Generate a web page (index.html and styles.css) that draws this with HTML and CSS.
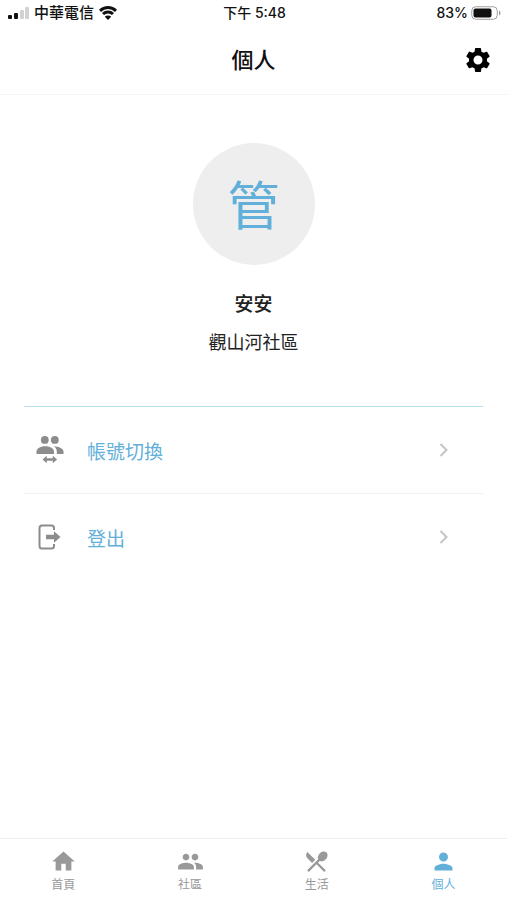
FILE: index.html
```html
<!DOCTYPE html>
<html lang="zh-Hant">
<head>
  <meta charset="UTF-8">
  <meta name="viewport" content="width=device-width, initial-scale=1">
  <title>個人</title>
  <link rel="stylesheet" href="styles.css">
</head>
<body>
  <div class="status-bar">
    <div class="status-left">
      <svg class="signal" viewBox="0 0 21 12">
        <rect x="0" y="8" width="4" height="4" rx="1"/>
        <rect x="6" y="6" width="4" height="6" rx="1"/>
        <rect class="off" x="12" y="3" width="4" height="9" rx="1"/>
        <rect class="off" x="17" y="0" width="4" height="12" rx="1"/>
      </svg>
      <span>中華電信</span>
      <svg class="wifi" viewBox="0 0 18 14">
        <path d="M1 4.800a11.500 11.500 0 0 1 16 0M4 8a7.300 7.300 0 0 1 10 0"/>
        <path class="dot" d="M9 14L5.800 10.800a4.600 4.600 0 0 1 6.400 0z"/>
      </svg>
    </div>
    <div class="status-time">下午 5:48</div>
    <div class="status-right">
      <span>83%</span>
      <svg class="battery" viewBox="0 0 30 14">
        <rect class="shell" x=".75" y=".75" width="25.500" height="12.500" rx="4"/>
        <rect x="2.500" y="2.500" width="18" height="9" rx="2"/>
        <path class="cap" d="M28 4.500c2 .8 2 4.200 0 5z"/>
      </svg>
    </div>
  </div>

  <header class="header">
    <h1>個人</h1>
    <button class="settings" type="button" aria-label="設定">
      <svg viewBox="0 0 24 24"><path d="M19.140 12.940c.04-.3.06-.61.06-.94 0-.32-.02-.64-.07-.94l2.030-1.580c.18-.14.23-.41.12-.61l-1.920-3.320c-.12-.22-.37-.29-.59-.22l-2.390.96c-.5-.38-1.030-.7-1.620-.94l-.36-2.540c-.04-.24-.24-.41-.48-.41h-3.840c-.24 0-.43.17-.47.41l-.36 2.540c-.59.24-1.130.57-1.620.94l-2.390-.96c-.22-.08-.47 0-.59.22L2.740 8.870c-.12.21-.08.47.12.61l2.030 1.580c-.05.3-.09.63-.09.94s.02.64.07.94l-2.030 1.580c-.18.14-.23.41-.12.61l1.920 3.320c.12.22.37.29.59.22l2.390-.96c.5.38 1.030.7 1.620.94l.36 2.540c.05.24.24.41.48.41h3.840c.24 0 .44-.17.47-.41l.36-2.540c.59-.24 1.130-.56 1.620-.94l2.390.96c.22.08.47 0 .59-.22l1.920-3.320c.12-.22.07-.47-.12-.61l-2.010-1.580zM12 15.600A3.600 3.600 0 1 1 12 8.400a3.600 3.600 0 0 1 0 7.200z"/></svg>
    </button>
  </header>

  <main>
    <section class="profile">
      <div class="avatar">管</div>
      <h2>安安</h2>
      <p>觀山河社區</p>
    </section>

    <div class="menu">
      <a class="menu-item" href="#switch">
        <svg class="menu-icon" viewBox="0 0 28 28">
          <circle cx="8.800" cy="3.900" r="3.900"/>
          <circle cx="18.800" cy="3.900" r="3.900"/>
          <path d="M.5 18v-2.500c0-3.500 5.200-5.300 8.800-5.300s8.700 1.800 8.700 5.300V18z"/>
          <path d="M17.800 10.300c4 .2 9.700 1.900 9.700 5.200V18h-6.700v-2.500c0-2-1.100-3.900-3-5.200z"/>
          <path d="M6.500 23.500l4.300-3.800v2.600h6v-2.600l4.300 3.800-4.300 3.800v-2.600h-6v2.600z"/>
        </svg>
        <span>帳號切換</span>
        <svg class="arrow" viewBox="0 0 10 14"><path d="M1.500 1l6 6-6 6"/></svg>
      </a>
      <a class="menu-item" href="#logout">
        <svg class="menu-icon" viewBox="0 0 28 28">
          <path class="line" d="M18 7V5q0-2.500-2.500-2.500H6Q3.500 2.500 3.500 5v18q0 2.500 2.500 2.500h9.500q2.500 0 2.500-2.500v-2"/>
          <path d="M10 11.700h8V8.300l6.500 5.700-6.500 5.700v-3.400h-8z"/>
        </svg>
        <span>登出</span>
        <svg class="arrow" viewBox="0 0 10 14"><path d="M1.500 1l6 6-6 6"/></svg>
      </a>
    </div>
  </main>

  <nav class="tabs">
    <a href="#home">
      <svg viewBox="0 0 24 24"><path d="M10 20v-6h4v6h5v-8h3L12 3 2 12h3v8z"/></svg>
      <span>首頁</span>
    </a>
    <a href="#community">
      <svg viewBox="0 0 24 24"><path d="M16 11c1.660 0 2.990-1.340 2.990-3S17.660 5 16 5s-3 1.340-3 3 1.340 3 3 3zm-8 0c1.660 0 2.990-1.340 2.990-3S9.660 5 8 5 5 6.340 5 8s1.340 3 3 3zm0 2c-2.330 0-7 1.170-7 3.500V19h14v-2.500c0-2.330-4.670-3.500-7-3.500zm8 0c-.29 0-.62.02-.97.05 1.160.84 1.970 1.970 1.970 3.450V19h6v-2.500c0-2.330-4.670-3.500-7-3.500z"/></svg>
      <span>社區</span>
    </a>
    <a href="#life">
      <svg viewBox="0 0 24 24"><path d="M8.100 13.340l2.830-2.830L3.910 3.500c-1.560 1.560-1.560 4.090 0 5.660l4.190 4.180zm6.780-1.810c1.530.71 3.680.21 5.270-1.380 1.910-1.910 2.280-4.650.81-6.120-1.460-1.460-4.200-1.100-6.120.81-1.590 1.590-2.090 3.740-1.380 5.270L3.700 19.870l1.410 1.410L12 14.410l6.880 6.880 1.410-1.410L13.410 13l1.470-1.470z"/></svg>
      <span>生活</span>
    </a>
    <a class="active" href="#me">
      <svg viewBox="0 0 24 24"><path d="M12 12c2.210 0 4-1.790 4-4s-1.790-4-4-4-4 1.790-4 4 1.790 4 4 4zm0 2c-2.670 0-8 1.340-8 4v2h16v-2c0-2.660-5.330-4-8-4z"/></svg>
      <span>個人</span>
    </a>
  </nav>
</body>
</html>
```

FILE: styles.css
```css
* { box-sizing: border-box; }
body { margin: 0; min-height: 100vh; display: flex; flex-direction: column; background: #fff; color: #222; font-family: "Inter", "Noto Sans CJK TC", sans-serif; }
h1, h2, p { margin: 0; }
a { text-decoration: none; }
svg { display: block; fill: currentColor; }

.status-bar { display: grid; grid-template-columns: 1fr auto 1fr; align-items: center; height: 26px; padding: 0 6px 0 8px; color: #111; font-size: 14px; line-height: 26px; font-weight: 500; }
.status-left, .status-right { display: flex; align-items: center; gap: 5px; }
.status-left { font-size: 15px; }
.status-right { justify-content: flex-end; gap: 3px; }
.signal { width: 21px; height: 12px; }
.signal .off { fill: #d2d2d2; }
.wifi { width: 18px; height: 14px; fill: none; stroke: currentColor; stroke-width: 3; }
.wifi .dot { fill: currentColor; stroke: none; }
.battery { width: 30px; height: 14px; }
.battery .shell { fill: none; stroke: #a0a0a0; }
.battery .cap { fill: #a0a0a0; }

.header { display: grid; grid-template-columns: 1fr auto 1fr; align-items: center; height: 69px; padding: 0 14px; border-bottom: 1px solid #f3f3f3; color: #111; }
.header h1 { grid-column: 2; font-size: 22px; line-height: 32px; font-weight: 500; }
.settings { justify-self: end; padding: 0; border: 0; background: none; color: #000; }
.settings svg { width: 30px; height: 30px; }

main { flex: 1; }
.profile { display: flex; flex-direction: column; align-items: center; padding: 48px 20px 48px; text-align: center; }
.avatar { width: 122px; height: 122px; padding-top: 4px; border-radius: 50%; background: #eee; color: #62afda; font-size: 52px; line-height: 120px; }
.profile h2 { margin-top: 25px; font-size: 19px; line-height: 30px; font-weight: 500; }
.profile p { margin-top: 8px; font-size: 18px; line-height: 30px; }

.menu { margin: 0 24px; border-top: 1px solid #b9def3; }
.menu-item { display: flex; align-items: center; height: 86px; padding: 0 34px 0 12px; color: #62afda; font-size: 19px; }
.menu-item + .menu-item { height: 87px; border-top: 1px solid #f2f2f2; }
.menu-item span { flex: 1; margin-left: 23px; }
.menu-icon { width: 28px; height: 28px; color: #8c8c8c; }
.menu-icon .line { fill: none; stroke: currentColor; stroke-width: 2; }
.arrow { width: 10px; height: 14px; fill: none; stroke: #c4c4c4; stroke-width: 2; }

.tabs { display: grid; grid-template-columns: repeat(4, 1fr); height: 62px; border-top: 1px solid #efefef; }
.tabs a { display: flex; flex-direction: column; align-items: center; padding-top: 9px; color: #999; font-size: 12px; line-height: 20px; }
.tabs svg { width: 27px; height: 27px; }
.tabs .active { color: #62afda; }
```
